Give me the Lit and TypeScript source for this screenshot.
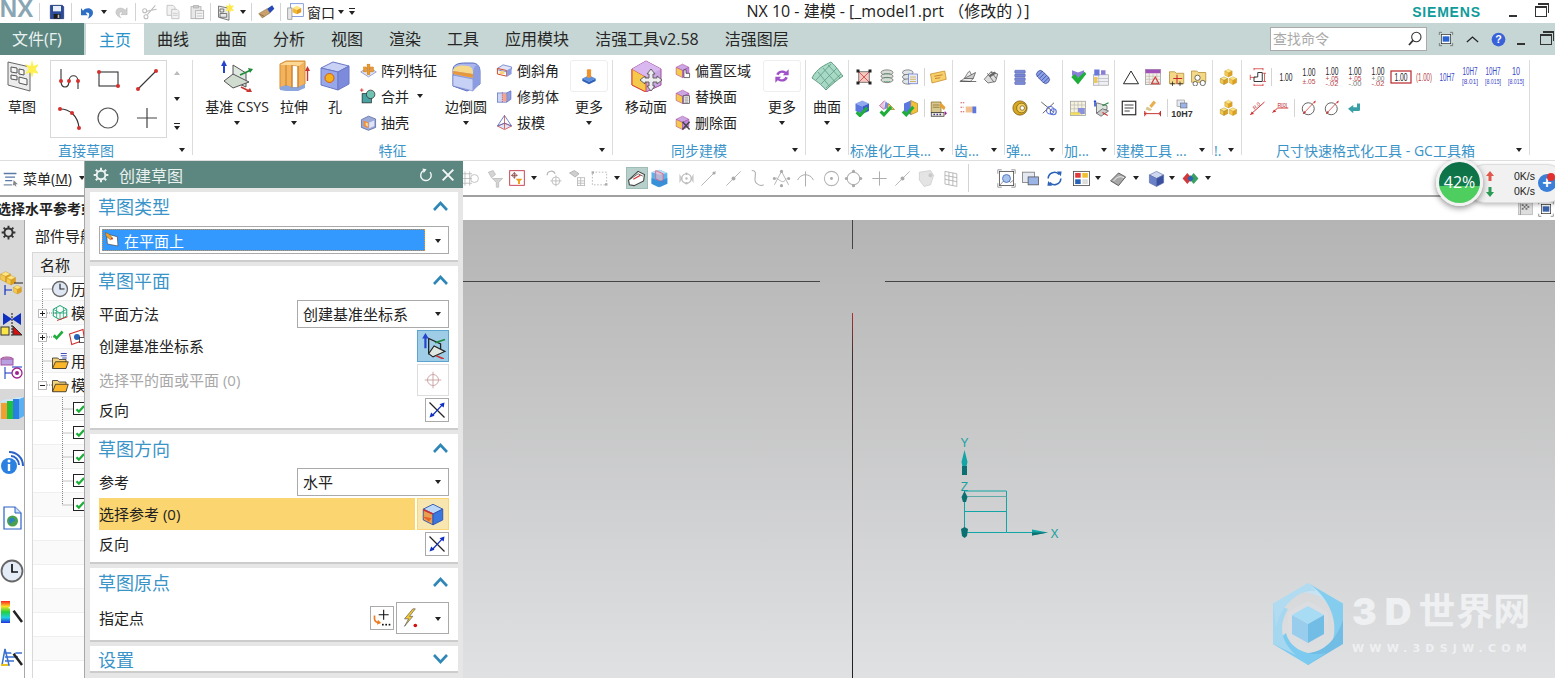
import { LitElement, html, css, svg } from "lit";
import { customElement } from "lit/decorators.js";

const cube = (t: string, l: string, r: string, s = "#5a6fa8") => svg`
  <path d="M12 3 21 7.5 12 12 3 7.5Z" fill=${t} stroke=${s} stroke-width=".8"/>
  <path d="M3 7.5 12 12V22L3 17.5Z" fill=${l} stroke=${s} stroke-width=".8"/>
  <path d="M21 7.5 12 12V22L21 17.5Z" fill=${r} stroke=${s} stroke-width=".8"/>`;

const dots = (...p: number[][]) => p.map(([x, y]) => svg`<circle cx=${x} cy=${y} r="2" fill="#d2312f"/>`);
const check = (x = 0, y = 0) => svg`<path transform="translate(${x} ${y})" d="M3 13 6 10 9 13 17 4 20 7 9 19Z" fill="#1fae3c"/>`;
const gray = "#b4b4b4";

// all drawn on a 24 box except the big ribbon ones, which use 32
const ICONS: Record<string, unknown> = {
  save: svg`<path d="M2 2H20L22 4V22H2Z" fill="#2a4a9a" stroke="#16306e"/><rect x="6" y="3" width="12" height="8" fill="#e8eef8"/><rect x="7" y="15" width="10" height="7" fill="#1c1c1c"/><rect x="13" y="16" width="2.5" height="5" fill="#bbb"/>`,
  undo: svg`<path d="M6 10C11 4 21 6 21 13C21 17 18 20 13 22C17 17 16 11 10 13L13 17H3V6Z" fill="#2d6fc4"/>`,
  redo: svg`<path transform="translate(24 0) scale(-1 1)" d="M6 10C11 4 21 6 21 13C21 17 18 20 13 22C17 17 16 11 10 13L13 17H3V6Z" fill="#cfcfcf" stroke="#aaa" stroke-width=".6"/>`,
  cut: svg`<g fill="none" stroke="#bdbdbd" stroke-width="1.6"><path d="M20 2 8 16M22 8 7 11"/><circle cx="6" cy="19" r="3"/><circle cx="4" cy="10" r="3"/></g>`,
  copy: svg`<g fill="#f2f2f2" stroke="#bbb" stroke-width="1.2"><path d="M3 2H12L15 5V17H3Z"/><path d="M10 8H18L21 11V22H10Z"/></g><path d="M12 14H19M12 17H19" stroke="#bbb"/>`,
  paste: svg`<rect x="3" y="4" width="15" height="18" fill="#e8e8e8" stroke="#aaa" stroke-width="1.2"/><rect x="7" y="2" width="7" height="4" fill="#ccc" stroke="#aaa"/><rect x="10" y="10" width="12" height="12" fill="#f5f5f5" stroke="#aaa" stroke-width="1.2"/><path d="M12 14H20M12 18H20" stroke="#aaa"/>`,
  newsk: svg`<path d="M2 4 16 7V23L2 19Z" fill="#e8e8e8" stroke="#555"/><path d="M4 8H9V12H4ZM4 14H13V19H4Z" fill="none" stroke="#555"/><path d="M17 0 18.5 4 23 3 20 7 23 11 18.5 10 17 14 15.5 10 11 11 14 7 11 3 15.5 4Z" fill="#ffe94a"/>`,
  brush: svg`<path d="M1 15 13 8 17 14 6 21Z" fill="#c9a06a" stroke="#7a5b30" stroke-width=".7"/><path d="M13 8 20 3 23 8 17 14Z" fill="#2748b8"/><path d="M3 16 9 19" stroke="#7a5b30"/>`,
  win: svg`<rect x="5" y="1" width="18" height="18" fill="#fff" stroke="#5a7ad0"/><path d="M14 4 20 7 14 10 8 7Z" fill="#ffe680"/><path d="M8 7 14 10V16L8 13Z" fill="#f2b632"/><path d="M20 7 14 10V16L20 13Z" fill="#e39a1a"/><rect x="1" y="7" width="6" height="16" fill="#e6e6e6" stroke="#888"/>`,
  skbig: svg`<path d="M2 2 24 7V31L2 25Z" fill="#ececec" stroke="#666"/><path d="M5 7 11 8V13L5 12ZM13 9 18 10V15L13 14ZM5 15 11 16V20L5 19ZM13 17 21 19V25L13 23Z" fill="#f7f7f7" stroke="#555"/><path d="M26 0 27.5 6 33 4 29.5 9 33 14 27.5 12.5 26 18 24.5 12.5 19 14 22.5 9 19 4 24.5 6Z" fill="#fff04f"/>`,
  spline: svg`<path d="M3 1V13C3 21 11 21 11 13C11 6 20 6 20 13V21" fill="none" stroke="#333" stroke-width="1.1"/>${dots([3, 13], [11, 13], [20, 13])}`,
  grect: svg`<rect x="3" y="4" width="19" height="14" fill="none" stroke="#333" stroke-width="1.1"/>${dots([3, 4], [22, 18])}`,
  gline: svg`<path d="M3 21 21 3" stroke="#333" stroke-width="1.1"/>${dots([3, 21], [21, 3])}`,
  garc: svg`<path d="M2 3C12 3 20 10 21 22" fill="none" stroke="#333" stroke-width="1.1"/>${dots([2, 3], [14, 7], [21, 22])}`,
  gcirc: svg`<circle cx="12" cy="12" r="10" fill="none" stroke="#555" stroke-width="1.2"/>`,
  gplus: svg`<path d="M12 2V22M2 12H22" stroke="#444" stroke-width="1.2"/>`,
  csys: svg`<path d="M12 5V21L25 27V13Z" fill="#dfe8e0" stroke="#555"/><path d="M3 21 12 14 28 22 12 28Z" fill="#cfdccf" stroke="#555"/><path d="M3 0 6 6H4V13H2V6H0Z" transform="translate(0 0)" fill="#2444d0"/><path d="M19 15 30 10" stroke="#1d8c3a" stroke-width="1.6"/><path d="M27 8 32 9 29 13Z" fill="#1d8c3a"/><path d="M20 27 28 31" stroke="#c8362f" stroke-width="1.6"/><path d="M25 32 31 32 29 28Z" fill="#c8362f"/>`,
  extrude: svg`<path d="M2 4 8 1 27 1 27 24 20 28 20 6 14 5 14 28 8 26 2 29Z" fill="#f3b25c" stroke="#d48e37"/><path d="M2 5 8 2 26 2 21 6 14 5 8 5Z" fill="#fbd894"/><path d="M2 27 8 25 14 27 20 27 27 24 27 28 20 31H8L2 30Z" fill="#8aa6dc"/><path d="M8 5V26M14 5V28M20 6V28" stroke="#c9802b" fill="none"/><path d="M29.500 21V9" stroke="#c8362f" stroke-width="1.4"/><path d="M27 11 29.500 6 32 11Z" fill="#c8362f"/>`,
  hole: svg`<path d="M2 8 14 2 30 6 19 12Z" fill="#c9d1f4" stroke="#6a78c8"/><path d="M2 8 19 12V30L2 25Z" fill="#98a6ea" stroke="#6a78c8"/><path d="M19 12 30 6V24L19 30Z" fill="#7d8bdc" stroke="#6a78c8"/><circle cx="10.500" cy="18" r="4.500" fill="#f5b11c" stroke="#d1591b"/>`,
  pattern: svg`<path d="M1 14 12 7 23 14 12 21Z" fill="#dfe4f6" stroke="#7a88c8"/><g fill="#ef9a2a" stroke="#b96b10" stroke-width=".5"><rect x="10" y="3" width="4" height="7"/><rect x="5" y="7" width="4" height="7"/><rect x="15" y="7" width="4" height="7"/><rect x="10" y="11" width="4" height="7"/></g>`,
  unite: svg`<rect x="3" y="8" width="13" height="13" fill="#49a3a3" stroke="#222"/><circle cx="15" cy="9" r="6" fill="#6fc2b2" stroke="#222"/><path d="M0 3H5M2.500 .5V5.500" stroke="#d22" stroke-width="1.2"/>`,
  shell: svg`<path d="M2 8 12 3 22 7V19L12 23 2 19Z" fill="#9caad8" stroke="#4c5a96"/><path d="M5 9 12 12V20L5 17Z" fill="#f08a3c"/><path d="M8 12 11 13V18L8 16Z" fill="#f8e0a0"/><path d="M13 12 20 9V17L13 20Z" fill="#dfe4f6"/>`,
  blend: svg`<path d="M3 10C3 4 9 3 16 3H22C28 3 30 7 30 12V24L17 31 3 26Z" fill="#a9b7ec" stroke="#5a6cc0"/><path d="M3 10C6 5 12 5 18 6 23 7 23 11 23 14L3 11Z" fill="#f6d98a"/><path d="M3 11 23 14V18L3 14Z" fill="#e8983a"/><path d="M3 15 23 19V31L3 26Z" fill="#c7d1f5" stroke="#5a6cc0" stroke-width=".5"/><path d="M23 14C23 10 24 5 28 5 30 8 30 12 30 24L23 31Z" fill="#8c9ce0"/>`,
  chamfer: svg`<path d="M2 9 10 4 22 7 22 10 15 14 2 11Z" fill="#dfe4f6" stroke="#5a6cc0"/><path d="M2 9 15 12V20L2 17Z" fill="none" stroke="#d14a2a" stroke-width="1.4"/><path d="M15 12 22 8V17L15 21Z" fill="#8c9ce0"/><path d="M5 13H12V17H5Z" fill="#fbd27a"/>`,
  trim: svg`<rect x="2" y="7" width="13" height="13" fill="#cdd6f6" stroke="#5a6cc0"/><path d="M15 7 21 4V16L15 20Z" fill="#8c9ce0" stroke="#5a6cc0"/><path d="M9 6V21" stroke="#c8362f" stroke-dasharray="2 1"/><rect x="10" y="8" width="5" height="11" fill="#f4a48a"/>`,
  draft: svg`<path d="M2 17 12 22 22 17 12 13Z" fill="#dfe4f6" stroke="#c8362f"/><path d="M12 2 2 17 12 13 22 17Z" fill="none" stroke="#5a6cc0" stroke-width="1.2"/><path d="M12 2V21" stroke="#c8362f"/>`,
  more1: svg`<path d="M4 15 12 11 20 15 12 19Z" fill="#5a90e0"/><path d="M4 15V18L12 22 20 18V15L12 19Z" fill="#2f62b8"/><rect x="9.500" y="4" width="5" height="10" rx="1" fill="#f2922a"/>`,
  move: svg`<path d="M16 1 31 9V25L16 32 2 25V9Z" fill="#c9a6e4" stroke="#a24aa0"/><path d="M2 9 16 17V32L2 25Z" fill="#f5c94b" stroke="#e0442b"/><path d="M16 1 31 9 16 17 2 9Z" fill="#d8b8ee"/><path d="M21 9 25 14H23V18H27V16L32 20 27 24V22H23V26H25L21 31 17 26H19V22H15V24L10 20 15 16V18H19V14H17Z" fill="#ededed" stroke="#555" stroke-width=".9"/>`,
  offset: svg`${cube("#c9a6e4", "#f5c94b", "#c08ae0", "#b04aa0")}<path d="M14 22V11H17V16H22V22Z" fill="#fff" stroke="#333"/>`,
  replace: svg`${cube("#c9a6e4", "#f5c94b", "#c08ae0", "#b04aa0")}<rect x="13" y="11" width="9" height="11" fill="#eee" stroke="#444"/><path d="M15 14H20M15 17H20M15 20H20" stroke="#666"/>`,
  del: svg`${cube("#c9a6e4", "#f5c94b", "#c08ae0", "#b04aa0")}<path d="M12 11 22 22M22 11 12 22" stroke="#444" stroke-width="2"/>`,
  more2: svg`<path d="M5 10C7 5 13 4 17 7L20 4V11H13L15 9C12 7 9 8 8 11Z" fill="#a050c8"/><path d="M19 14C17 19 11 20 7 17L4 20V13H11L9 15C12 17 15 16 16 13Z" fill="#a050c8"/>`,
  surf: svg`<path d="M1 18C6 8 14 5 20 2 26 7 29 13 32 16 26 20 20 25 15 30 10 24 5 21 1 18Z" fill="#a8d9c6" stroke="#5f9c82"/><path d="M7 12 19 27M12 8 24 22M17 5 29 18M5 20 20 4M10 24 26 8M15 28 30 14" stroke="#5f9c82" fill="none" stroke-width=".8"/>`,
  s1: svg`<rect x="5" y="5" width="14" height="14" fill="#f4c8c0" stroke="#555"/><path d="M5 5 19 19M19 5 5 19" stroke="#d2312f"/><g fill="#222"><rect x="2" y="2" width="4" height="4"/><rect x="18" y="2" width="4" height="4"/><rect x="2" y="18" width="4" height="4"/><rect x="18" y="18" width="4" height="4"/></g>`,
  s2: svg`<g fill="#d8dcd6" stroke="#666"><ellipse cx="12" cy="6" rx="8" ry="3.500"/><ellipse cx="12" cy="11" rx="8" ry="3.500"/><ellipse cx="12" cy="16" rx="8" ry="3.500"/></g><path d="M8 8H16M8 13H16M8 18H16" stroke="#3d9060" stroke-dasharray="2 1"/>`,
  s3: svg`<g fill="#dfe4e8" stroke="#666"><ellipse cx="9" cy="6" rx="7" ry="3.500"/><ellipse cx="9" cy="12" rx="7" ry="3.500"/><ellipse cx="9" cy="18" rx="7" ry="3.500"/></g><rect x="10" y="8" width="12" height="13" fill="#e8ecf8" stroke="#6a78c8"/><path d="M12 12H20M12 15H20M12 18H20" stroke="#c8a030"/>`,
  tag: svg`<path d="M2 8 21 4 23 15 4 20Z" fill="#f6d06a" stroke="#c88a20"/><path d="M7 11 18 9M8 14 15 13" stroke="#b86a20"/>`,
  c1: svg`<path d="M11 2 20 6 11 10 2 6Z" fill="#8fa8ee"/><path d="M11 10V20L20 16V6Z" fill="#3a5cd0"/><path d="M2 6V16L11 20V10Z" fill="#5a78e0"/>${check(-1, 6)}`,
  c2: svg`<path d="M10 3 18 10 8 14Z" fill="#7a8ae0"/><path d="M9 2 2 9 8 14" fill="#e8c8e0" stroke="#c04a8a"/><path d="M14 6 22 14H12Z" fill="#f0d070" stroke="#a08a20"/>${check(-1, 5)}`,
  c3: svg`<path d="M13 2 22 6V17L13 21Z" fill="#f3c03a" stroke="#b88a20"/><path d="M4 6 13 2V21L4 17Z" fill="#5a78e0"/>${check(-2, 5)}`,
  note: svg`<path d="M3 4H16V18H3Z" fill="#d8c890" stroke="#8a6a20"/><path d="M5 8H14M5 11H14" stroke="#8a6a20"/><rect x="3" y="18" width="17" height="5" fill="#f0e8d0" stroke="#333"/><path d="M6 20.500H8M10 20.500H12M14 20.500H16" stroke="#2a3ab0" stroke-width="2"/><path d="M16 5 22 11 20 15 14 9Z" fill="#e8a030"/><path d="M21 16V22L24 19Z" fill="#a020a0"/>`,
  hand1: svg`<path d="M2 17C8 16 10 7 14 4L19 14 15 18Z" fill="#eee" stroke="#555"/><path d="M7 14 22 6 19 14Z" fill="#ccc" stroke="#555"/><path d="M1 18H23" stroke="#444"/>`,
  hand2: svg`<path d="M3 15 12 5 21 8 18 18 8 20Z" fill="#ddd" stroke="#555"/><path d="M7 7 16 19M12 5 19 14" stroke="#555"/><path d="M10 11 18 6" stroke="#666" stroke-width="3"/>`,
  hand3: svg`<path d="M2 5H8M2 11H6M2 17H8" stroke="#b23" stroke-dasharray="2 1"/><path d="M9 10H19V18H9Z" fill="#f0c090"/><rect x="18" y="10" width="5" height="9" fill="#5a78e0"/>`,
  stack: svg`<g fill="#7a88d8" stroke="#3c4a9a" stroke-width=".6"><rect x="5" y="3" width="14" height="4" rx="1"/><rect x="5" y="8" width="14" height="4" rx="1"/><rect x="5" y="13" width="14" height="4" rx="1"/><rect x="5" y="18" width="14" height="4" rx="1"/></g>`,
  coil: svg`<circle cx="12" cy="12" r="9.500" fill="#d8a820" stroke="#7a5a10"/><circle cx="14" cy="12" r="6.500" fill="#f0d060" stroke="#7a5a10"/><circle cx="15" cy="12" r="3" fill="#fff" stroke="#7a5a10"/>`,
  spring: svg`<g transform="rotate(45 12 12)"><rect x="2" y="7" width="20" height="10" rx="5" fill="#8aa0e8" stroke="#3a4a98"/><path d="M6 7V17M10 7V17M14 7V17M18 7V17" stroke="#3a4a98"/></g>`,
  spring2: svg`<path d="M3 4 20 18M20 5 5 19" stroke="#555" stroke-width="1.2"/><circle cx="15" cy="15" r="5" fill="none" stroke="#5a70d8" stroke-width="1.500"/><circle cx="19" cy="17" r="4" fill="none" stroke="#5a70d8" stroke-width="1.500"/>`,
  addck: svg`<path d="M4 3 12 6 20 3V10L12 13 4 10Z" fill="#8a80d8"/><path d="M3 12 8 8 12 13 21 5 23 8 12 22Z" fill="#1fae3c"/>`,
  addform: svg`<rect x="2" y="9" width="20" height="14" fill="#eef0f6" stroke="#aaa"/><path d="M9 9V23M2 14H22M2 18H22" stroke="#bbb"/><path d="M3 2 10 2 10 10 3 10Z" fill="#6a78d8"/><rect x="12" y="3" width="6" height="6" fill="#8a80d8"/><rect x="3" y="12" width="4" height="8" fill="#f0c84a"/>`,
  addtbl: svg`<rect x="2" y="3" width="20" height="19" fill="#f8f4dc" stroke="#999"/><path d="M7 3V22M12 3V22M17 3V22M2 8H22M2 13H22M2 18H22" stroke="#bbb"/><rect x="12" y="12" width="9" height="8" fill="#8a90e0"/><rect x="2" y="18" width="13" height="3" fill="#f4dc50"/>`,
  csysm: svg`<path d="M6 5V19L20 14V9Z" fill="#dde6de" stroke="#555"/><path d="M6 19 14 13 22 16 12 23Z" fill="#ccc" stroke="#555"/><path d="M4 1 6 4H5V10H3V4H2Z" fill="#2444d0"/><path d="M14 9 22 5" stroke="#1d8c3a" stroke-width="1.500"/><path d="M14 18 21 22" stroke="#c8362f" stroke-width="1.500"/>`,
  tri: svg`<path d="M12 4 22 21H2Z" fill="none" stroke="#222" stroke-width="1.300"/>`,
  tblr: svg`<rect x="2" y="2" width="20" height="20" fill="#f4f0ea" stroke="#999"/><rect x="2" y="2" width="20" height="5" fill="#a050b8"/><path d="M7 7V22M12 7V22M17 7V22M2 11H22M2 15H22M2 19H22" stroke="#c0bcb0"/><path d="M15 12 20 21H10Z" fill="none" stroke="#d2312f" stroke-width="1.400"/>`,
  fold1: svg`<path d="M2 5H9L11 7H21V21H2Z" fill="#f3d888" stroke="#b08a30"/><path d="M12 9V21M7 14H19" stroke="#c8202a" stroke-width="1.300"/><path d="M6 18V24M3 21H9M16 18V24M13 21H20" stroke="#222"/>`,
  fold2: svg`<path d="M2 4H9L11 6H21V19H2Z" fill="#f3d888" stroke="#b08a30"/><circle cx="10" cy="13" r="3.500" fill="#fff" stroke="#444"/><circle cx="17" cy="20" r="3.500" fill="#fff" stroke="#444"/><circle cx="7" cy="21" r="3" fill="#fff" stroke="#444"/>`,
  list: svg`<rect x="3" y="3" width="18" height="18" fill="#fff" stroke="#222" stroke-width="1.500"/><path d="M6 8H18M6 12H18M6 16H13" stroke="#444" stroke-width="1.400"/>`,
  broom: svg`<path d="M13 2 16 5 10 12 7 9Z" fill="#e8b050"/><path d="M4 10 11 14 8 16 2 14Z" fill="#d8c890"/><path d="M1 16V23M22 16V23M1 19.500H22" stroke="#c02020" stroke-width="1.200"/><path d="M3 17.500 1 19.500 3 21.500M20 17.500 22 19.500 20 21.500" fill="none" stroke="#c02020"/>`,
  cubes: svg`<g transform="translate(6 0) scale(.55)">${cube("#ffe680", "#f5c94b", "#e0a020", "#b88a20")}</g><g transform="translate(0 10) scale(.55)">${cube("#ffe680", "#f5c94b", "#e0a020", "#807020")}</g><g transform="translate(12 10) scale(.55)">${cube("#ffe680", "#f5c94b", "#e0a020", "#b88a20")}</g>`,
  dimline: svg`<path d="M3 9V16M3 12.500H10" fill="none" stroke="#d2312f"/><path d="M22 7V18M20 7H24M20 18H24" fill="none" stroke="#d2312f"/><path d="M8 1H20M8 -1V3M20 -1V3M8 23H20M8 21V25M20 21V25" stroke="#d2312f" fill="none"/><path d="M8 12H13V6H19V18H8Z" fill="none" stroke="#333" stroke-width="1.300"/>`,
  rdiag: svg`<path d="M3 21 22 4" stroke="#d2312f" stroke-width="1.300"/><path d="M3 21 8 20 5 16.500Z" fill="#d2312f"/><text x="13" y="11" transform="rotate(-42 13 11)" text-anchor="middle" font-size="7" font-family="Liberation Sans" fill="#b8262a">R.0</text>`,
  rdiag2: svg`<path d="M2 18 9 12H23" fill="none" stroke="#d2312f" stroke-width="1.300"/><path d="M2 18 7 17 4 14Z" fill="#d2312f"/><text x="15" y="10" text-anchor="middle" font-size="7" font-family="Liberation Sans" fill="#b8262a">R[0]</text>`,
  dia1: svg`<circle cx="11" cy="13" r="8" fill="none" stroke="#555" stroke-width="1.200"/><path d="M4 20 20 3" stroke="#d2312f"/><path d="M18 4 21 2 20 6Z M6 16 4 20 8 18Z" fill="#d2312f"/>`,
  back: svg`<path d="M4 13 11 8V11H16V6H20V14C20 16 19 16 18 16H11V19Z" fill="#3aa0a8"/>`,
  search: svg`<circle cx="14" cy="9" r="7" fill="#fff" stroke="#333" stroke-width="1.600"/><path d="M9 14 3 21" stroke="#333" stroke-width="2.600"/>`,
  fit: svg`<path d="M2 6V2H6M18 2H22V6M22 18V22H18M6 22H2V18" fill="none" stroke="#555"/><rect x="5" y="5" width="14" height="14" fill="#fff" stroke="#222"/><rect x="7" y="8" width="10" height="8" fill="#2a62d0"/>`,
  chev: svg`<path d="M3 16 12 8 21 16" fill="none" stroke="#222" stroke-width="2"/>`,
  help: svg`<circle cx="12" cy="12" r="11" fill="#3a62d8"/><text x="12" y="18" text-anchor="middle" font-size="17" font-weight="700" font-family="Liberation Sans" fill="#fff">?</text>`,
  snap: svg`<g fill="none" stroke="${gray}"><path d="M2 6H14M2 12H14M2 18H14M5 3V21M11 3V21"/><circle cx="17" cy="12" r="5"/></g>`,
  tfil: svg`<path d="M3 4 9 2 12 7 7 11ZM8 12H21L16 17V23H13V17Z" fill="#d4d4d4" stroke="#bbb"/>`,
  snapf: svg`<rect x="1" y="1" width="22" height="22" fill="#fff" stroke="#c93a4a" stroke-width="1.400"/><path d="M8 3V13M3 8H13" stroke="#843b3b" stroke-width="1.200"/><circle cx="8" cy="8" r="3" fill="none" stroke="#843b3b"/><path d="M10 13H20L16.500 17V21H13.500V17Z" fill="#f0a020"/>`,
  tg3: svg`<g fill="none" stroke="${gray}"><path d="M4 8C4 2 12 1 14 6" stroke-width="1.500"/><circle cx="15" cy="15" r="5"/><path d="M15 8V22M8 15H22"/></g>`,
  tg4: svg`<path d="M2 5 8 2 14 6 9 10Z" fill="#cfcfcf" stroke="#aaa"/><g fill="none" stroke="${gray}"><rect x="12" y="11" width="9" height="10"/><path d="M12 15H21M12 18H21M16 11V21"/></g>`,
  tg5: svg`<rect x="3" y="4" width="18" height="16" fill="none" stroke="#aaa" stroke-dasharray="2 2"/><g fill="#aaa"><rect x="2" y="3" width="3" height="3"/><rect x="19" y="18" width="3" height="3"/></g>`,
  wshade: svg`<path d="M2 14 14 3 22 7 21 15 9 21 3 20Z" fill="#fff" stroke="#444" stroke-width="1.400"/><path d="M4 13 14 6 20 9" fill="none" stroke="#444"/><path d="M8 13 17 8" stroke="#d2312f" stroke-width="1.500"/>`,
  shade: svg`<path d="M3 5 13 2 22 6V19L11 23 3 19Z" fill="#5ab4ee"/><path d="M3 5 13 8 22 6 13 2Z" fill="#b8dcf5"/><path d="M8 3V13L17 17V7Z" fill="#f3b8c8" fill-opacity=".6" stroke="#e0607a"/><path d="M3 19 13 23 22 19V12L13 16 3 12Z" fill="#2a80d0" fill-opacity=".7"/>`,
  tg6: svg`<path d="M3 6 7 12 3 18ZM21 6 17 12 21 18Z" fill="#ccc"/><circle cx="12" cy="12" r="6" fill="none" stroke="${gray}" stroke-width="1.300"/><g fill="#bbb"><circle cx="12" cy="6" r="1.500"/><circle cx="12" cy="18" r="1.500"/><circle cx="12" cy="12" r="1.500"/></g>`,
  tg7: svg`<path d="M3 21 21 3" stroke="${gray}" stroke-width="1.200"/><circle cx="19" cy="5" r="2" fill="#aaa"/>`,
  tg8: svg`<path d="M3 21 21 3" stroke="${gray}" stroke-width="1.200"/><circle cx="12" cy="12" r="2.500" fill="#aaa"/>`,
  tg9: svg`<path d="M6 2C16 2 6 14 12 18 15 21 19 21 21 20" fill="none" stroke="#aaa" stroke-width="1.300"/>`,
  tg10: svg`<path d="M3 20 12 3 21 20M5 11C10 14 14 20 18 12" fill="none" stroke="${gray}" stroke-width="1.200"/><g fill="#aaa"><circle cx="12" cy="3" r="2"/><circle cx="3" cy="12" r="2"/><circle cx="12" cy="21" r="2"/><circle cx="21" cy="12" r="2"/></g>`,
  tg11: svg`<path d="M2 14C6 5 18 5 22 14M12 3V22" fill="none" stroke="#aaa" stroke-width="1.200"/>`,
  tg12: svg`<circle cx="12" cy="12" r="9" fill="none" stroke="${gray}" stroke-width="1.300"/><circle cx="12" cy="12" r="1.800" fill="#aaa"/>`,
  tg13: svg`<circle cx="12" cy="12" r="8" fill="none" stroke="${gray}" stroke-width="1.300"/><g fill="#aaa"><circle cx="12" cy="3" r="2"/><circle cx="12" cy="21" r="2"/><circle cx="3" cy="12" r="2"/><circle cx="21" cy="12" r="2"/></g>`,
  tg14: svg`<path d="M12 3V21M3 12H21" stroke="#aaa" stroke-width="1.200"/>`,
  tg15: svg`<path d="M3 4 17 2 21 8 17 20 9 22 3 14Z" fill="#e4e4e4" stroke="#ccc"/><circle cx="17" cy="8" r="2.500" fill="#c8c8c8"/>`,
  tg16: svg`<path d="M5 3 20 6V22L5 19Z" fill="none" stroke="#aaa"/><path d="M5 8 20 11M5 13 20 16M10 4V20M15 5V21" stroke="#aaa"/>`,
  view1: svg`<rect x="3" y="3" width="18" height="18" fill="#fff" stroke="#444"/><path d="M3 21 12 11 17 17 21 14" fill="none" stroke="#777"/><circle cx="12" cy="12" r="5" fill="#a8c4ec" stroke="#3a62b8"/><path d="M1 6V1H6M18 1H23V6M1 18V23H6M18 23H23V18" fill="none" stroke="#888"/>`,
  view2: svg`<rect x="2" y="4" width="15" height="13" fill="#e4e8f0" stroke="#777"/><rect x="9" y="10" width="13" height="10" fill="#9ab4e8" stroke="#555"/>`,
  rot: svg`<path d="M4 12A8 8 0 0 1 18 7" fill="none" stroke="#2a62b8" stroke-width="2"/><path d="M20 12A8 8 0 0 1 6 17" fill="none" stroke="#2a62b8" stroke-width="2"/><path d="M15 3 21 3 20 9Z" fill="#2a62b8"/><path d="M9 21 3 21 4 15Z" fill="#2a62b8"/>`,
  vgrid: svg`<rect x="2" y="3" width="20" height="18" fill="#fff" stroke="#444"/><rect x="4" y="5" width="7" height="6" fill="#e03a3a"/><rect x="13" y="5" width="7" height="6" fill="#f0c030"/><rect x="4" y="13" width="7" height="6" fill="#2a62b8"/><rect x="13" y="13" width="7" height="6" fill="#ddd"/>`,
  hat: svg`<path d="M2 15 12 5 21 10 12 21Z" fill="#a8a8a8" stroke="#444"/><path d="M6 15C10 9 15 9 19 11" fill="none" stroke="#fff"/>`,
  vcube: svg`${cube("#cfd8f0", "#6a80c8", "#3a50a0")}`,
  vdiamond: svg`<path d="M2 12 8 5 14 12 8 19Z" fill="#d23a3a"/><path d="M10 12 16 5 22 12 16 19Z" fill="#3aa060"/><path d="M8 12 12 8 16 12 12 16Z" fill="#2a62b8"/>`,
  menu: svg`<path d="M1 4H19V6H1ZM3 9H17V11H3ZM3 14H13V16H3Z" fill="#5a7aa8"/><path d="M1 20H13V22H1Z" fill="#8a9ab0"/><path d="M15 14 21 20 18 20 19 24 16 21 14 22Z" fill="#888"/>`,
  gear: svg`<circle cx="12" cy="12" r="6.500" fill="none" stroke="currentColor" stroke-width="3"/><g stroke="currentColor" stroke-width="3"><path d="M12 1V5M12 19V23M1 12H5M19 12H23M4.200 4.200 7 7M17 17 19.800 19.800M19.800 4.200 17 7M7 17 4.200 19.800"/></g>`,
  reset: svg`<path d="M7 5A9 9 0 1 0 19 7" fill="none" stroke="#f2f6f5" stroke-width="2.400"/><path d="M13 2 6 1 8 9Z" fill="#f2f6f5"/>`,
  close: svg`<path d="M4 4 20 20M20 4 4 20" stroke="#f2f6f5" stroke-width="3"/>`,
  skplane: svg`<path d="M4 3 20 7 21 21 5 18Z" fill="#fff" stroke="#444"/><path d="M2 1 6 2 13 9 10 12 3 6Z" fill="#e8a030" stroke="#7a4a10" stroke-width=".7"/><path d="M11 9 13 11" stroke="#d2312f" stroke-width="2"/>`,
  csysb: svg`<path d="M8 5V19L19 16V10Z" fill="none" stroke="#222" stroke-width="1.200"/><path d="M8 19 13 12 23 17 12 22Z" fill="#dfe8e0" stroke="#222"/><path d="M5 0 8 5H6V14H4V5H2Z" fill="#2444d0"/><path d="M14 9 23 6" stroke="#1d8c3a" stroke-width="1.600"/><path d="M15 21 22 24" stroke="#c8362f" stroke-width="1.600"/>`,
  target: svg`<circle cx="12" cy="12" r="6" fill="none" stroke="#c9a0a0"/><path d="M12 3V21M3 12H21" stroke="#c9a0a0"/>`,
  flip: svg`<path d="M3 3 21 21" stroke="#222" stroke-width="1.400"/><path d="M20 4 7 18" stroke="#1030c0" stroke-width="1.500"/><path d="M21 3 20 9 15 5ZM3 21 5 15 9 19Z" fill="#1030c0"/>`,
  pick: svg`${cube("#bcd8f8", "#e8a050", "#3a78e0", "#2a50b0")}<path d="M3 8 12 12" stroke="#d2312f" stroke-width="1.500"/><path d="M2 14 11 16 8 19 6 17" fill="#e8602a"/>`,
  point: svg`<path d="M3 9V13C3 16 6 18 9 17" fill="none" stroke="#f07a20" stroke-width="2"/><path d="M7 14 11 18 6 20Z" fill="#f07a20"/><path d="M14 2V14M8 8H20" stroke="#111" stroke-width="1.300"/><g fill="#111"><rect x="12" y="19" width="2" height="2"/><rect x="16" y="19" width="2" height="2"/><rect x="20" y="19" width="2" height="2"/></g>`,
  bolt: svg`<path d="M13 1 3 13 8 13 3 22 13 10 9 10 16 1Z" fill="#f5c830" stroke="#555" stroke-width=".8"/><circle cx="16" cy="21" r="2.200" fill="#d21010"/>`,
  clock: svg`<circle cx="12" cy="12" r="10" fill="#dfe6f4" stroke="#666" stroke-width="1.800"/><path d="M12 5V12H18" fill="none" stroke="#222" stroke-width="1.500"/>`,
  cube3d: svg`<path d="M12 2 21 7V16L12 21 3 16V7Z" fill="none" stroke="#16a070" stroke-width="1.300"/><path d="M3 7 12 12 21 7M12 12V21M7.500 4.500V18.500M16.500 4.500V18.500M3 12 21 12" fill="none" stroke="#16a070"/><path d="M8 22 22 17" stroke="#d2312f" stroke-width="1.300"/>`,
  redcam: svg`<path d="M2 8 20 2 22 16 5 22Z" fill="#fff" stroke="#d2312f" stroke-width="1.500"/><circle cx="12" cy="12" r="4" fill="#2a62b8"/><rect x="15" y="12" width="8" height="8" fill="#222"/><rect x="16" y="13" width="6" height="6" fill="#fff"/>`,
  folder: svg`<path d="M2 6H9L11 8H20V20H2Z" fill="#f3d27a" stroke="#222"/><path d="M6 11H23L20 21H2Z" fill="#fbb62a" stroke="#222"/>`,
  folderu: svg`<path d="M2 8H9L11 10H20V21H2Z" fill="#f3d27a" stroke="#222"/><path d="M6 13H23L20 22H2Z" fill="#fbb62a" stroke="#222"/><path d="M13 2H21M13 5H21M15 8H21" stroke="#2a3ab0" stroke-width="1.200"/>`,
  asm: svg`<g transform="translate(-1 -1) scale(.55)">${cube("#ffe680", "#f5c94b", "#e0a020", "#c89020")}</g><g transform="translate(5 3) scale(.5)">${cube("#ffe680", "#f5c94b", "#e0a020", "#c89020")}</g><path d="M5 14V24M5 19H12" stroke="#1030c0" stroke-width="1.200"/><g transform="translate(12 13) scale(.45)">${cube("#ffe680", "#f5c94b", "#e0a020", "#c89020")}</g><path d="M14 12H23" stroke="#222"/>`,
  bow: svg`<path d="M3 0 12 6 3 12ZM21 0 12 6 21 12Z" fill="#1030c0"/><rect x="1" y="14" width="8" height="8" fill="#fbe64a" stroke="#333"/><path d="M13 22V13L22 22Z" fill="#d21010" stroke="#333"/><path d="M12 0V24" stroke="#111" stroke-dasharray="2 1"/>`,
  roles: svg`<ellipse cx="7" cy="4" rx="6" ry="2" fill="#d0a0c0" stroke="#a050a0"/><rect x="1" y="4" width="12" height="6" fill="#b8a0e0" stroke="#a050a0"/><path d="M5 12V24M5 18H12M12 12H22" stroke="#1030c0"/><circle cx="17" cy="18" r="5" fill="none" stroke="#a02090" stroke-width="1.300"/><circle cx="17" cy="18" r="2" fill="#a02090"/>`,
  books: svg`<rect x="1" y="7" width="6" height="16" fill="#f0a030"/><rect x="7" y="5" width="6" height="18" fill="#20c040"/><rect x="13" y="3" width="6" height="20" fill="#2a80e0"/><path d="M19 3 24 1V20L19 23Z" fill="#5ab0f0"/><path d="M1 7 6 5H7V5H13V3H19L24 1H18L12 3H7L1 5Z" fill="#cfe6f8"/>`,
  info: svg`<path d="M9 1C17 1 23 7 23 15" fill="none" stroke="#2a62c8" stroke-width="2"/><path d="M11 5C15 5 19 9 19 14" fill="none" stroke="#2a62c8" stroke-width="2"/><circle cx="9" cy="15" r="8" fill="#2a80e0"/><path d="M9 13V20" stroke="#fff" stroke-width="2.400"/><circle cx="9" cy="10" r="1.500" fill="#fff"/>`,
  page: svg`<path d="M4 1H15L21 7V23H4Z" fill="#fff" stroke="#2a62c8" stroke-width="1.200"/><path d="M15 1V7H21" fill="#cfe0f8" stroke="#2a62c8"/><circle cx="12.500" cy="15" r="5.500" fill="#4aa050"/><path d="M9 14C11 10 15 12 15 15 12 15 11 18 10 18Z" fill="#2a80c8"/>`,
  clockb: svg`<circle cx="12" cy="12" r="10.500" fill="#e4ecf8" stroke="#666" stroke-width="1.800"/><path d="M12 5V13H18" fill="none" stroke="#111" stroke-width="1.700"/>`,
  colors: svg`<defs><linearGradient id="rb" x1="0" x2="0" y1="0" y2="1"><stop offset="0" stop-color="#ff2020"/><stop offset=".25" stop-color="#f8e020"/><stop offset=".5" stop-color="#20d040"/><stop offset=".75" stop-color="#20d0e0"/><stop offset="1" stop-color="#2030e0"/></linearGradient></defs><rect x="1" y="1" width="9" height="22" fill="url(#rb)"/><path d="M13 10 22 22" stroke="#222" stroke-width="2.500"/><path d="M11 1 12.500 5 16 3 14.500 7 18 8 14.500 10 12 12 11 9 8 8 11 6Z" fill="#fff"/>`,
  wand: svg`<path d="M2 22 5 6 9 22ZM5 10H22M5 14H18M5 18H14" fill="none" stroke="#3a70d0" stroke-width="1.500"/><path d="M13 10 22 22" stroke="#222" stroke-width="2.500"/><path d="M11 1 12.500 5 16 3 14.500 7 18 8 14.500 10 12 12 11 9 8 8 11 6Z" fill="#fff"/><path d="M1 22H8" stroke="#e8c020" stroke-width="2"/>`,
  checker: svg`<rect x="1" y="2" width="22" height="20" fill="#ddd" stroke="#aaa"/><g fill="#777"><rect x="6" y="5" width="3" height="3"/><rect x="12" y="5" width="3" height="3"/><rect x="9" y="8" width="3" height="3"/><rect x="15" y="8" width="3" height="3"/><rect x="6" y="11" width="3" height="3"/><rect x="12" y="11" width="3" height="3"/></g><path d="M4 4V22" stroke="#777"/>`,
  screen: svg`<rect x="5" y="5" width="14" height="14" fill="#fff" stroke="#222"/><rect x="7" y="8" width="10" height="8" fill="#3a62a8"/><path d="M1 5V1H5M19 1H23V5M23 19V23H19M5 23H1V19" fill="none" stroke="#666"/>`,
};

const BIG = new Set(["skbig", "csys", "extrude", "hole", "blend", "move", "surf"]);

const ic = (name: string, size = 16) => html`<svg
  class="ic"
  width=${size}
  height=${size}
  viewBox=${BIG.has(name) ? "0 0 32 32" : "0 0 24 24"}
>${ICONS[name]}</svg>`;

const caret = html`<i class="caret"></i>`;

// small dimension samples of the GC toolbox, kept as real text
type Line = [string, string, number, number, number?];
const dim = (lines: Line[], box?: string) => html`<svg class="ic" width="22" height="22" viewBox="0 0 22 22">
  ${box ? svg`<rect x="1" y="5" width="20" height="12" fill="#fff" stroke=${box} stroke-width="1.200"/>` : ""}
  ${lines.map(([t, c, y, len, fs = 10]) => svg`<text x="11" y=${y} text-anchor="middle" font-size=${fs} font-family="Liberation Sans" fill=${c}
    textLength=${len} lengthAdjust="spacingAndGlyphs">${t}</text>`)}
</svg>`;

interface Item { c: number; w: number; t: unknown }
// flow items one after the other, the gap before each comes from its centre in the data
const placed = (origin: number, items: Item[]) => {
  let edge = origin;
  return items.map((i) => {
    const left = i.c - i.w / 2;
    const gap = left - edge;
    edge = left + i.w;
    return html`<div class="cell" style="margin-left:${gap}px;width:${i.w}px">${i.t}</div>`;
  });
};
const mini = (list: [string | unknown, number][]) =>
  list.map(([n, c]) => ({
    c,
    w: n === "sep" ? 1 : 22,
    t: n === "sep" ? html`<span class="vsep"></span>` : typeof n === "string" ? ic(n, 18) : n,
  }));

const big = (name: string, label: string, drop = true, size = 32) => html`<div class="big">
  ${ic(name, size)}<span class="blabel">${label}</span>${drop ? caret : ""}
</div>`;
const more = (name: string) => html`<div class="big">
  <span class="morebox">${ic(name, 20)}</span><span class="blabel">更多</span>${caret}
</div>`;
const col = (rows: [string, string, boolean?][]) => html`<div class="col">
  ${rows.map(([n, t, d]) => html`<div class="smallrow">${ic(n, 17)}<span>${t}</span>${d ? html`<i class="caret mc"></i>` : ""}</div>`)}
</div>`;

interface Group { x: number; w: number; label: string; center?: boolean; body: unknown }

const minis = (x: number, a: [string | unknown, number][], b: [string | unknown, number][]) => html`<div class="minis">
  <div class="mrow">${placed(x, mini(a))}</div>
  <div class="mrow">${placed(x, mini(b))}</div>
</div>`;

const B = "#3c46c8";
const R = "#b8434a";
const K = "#222";
const H = "#777";

const GROUPS: Group[] = [
  {
    x: 0, w: 193, label: "直接草图", center: true,
    body: html`<div class="body">${placed(0, [
      { c: 22, w: 34, t: html`<div class="big">${ic("skbig", 32)}<span class="blabel">草图</span></div>` },
      {
        c: 108.5, w: 117, t: html`<div class="gallery">
          ${["spline", "grect", "gline", "garc", "gcirc", "gplus"].map((n) => html`<span class="gcell">${ic(n, 24)}</span>`)}
        </div>`,
      },
      {
        c: 177, w: 12, t: html`<div class="scrollc">
          <i class="caret up"></i>${caret}<span class="over">${caret}</span>
        </div>`,
      },
    ])}</div>`,
  },
  {
    x: 193, w: 420, label: "特征", center: true,
    body: html`<div class="body">${placed(193, [
      { c: 237, w: 68, t: big("csys", "基准 CSYS") },
      { c: 294, w: 34, t: big("extrude", "拉伸") },
      { c: 335, w: 32, t: big("hole", "孔", false) },
      { c: 399, w: 78, t: col([["pattern", "阵列特征"], ["unite", "合并", true], ["shell", "抽壳"]]) },
      { c: 466, w: 44, t: big("blend", "边倒圆") },
      { c: 529, w: 66, t: col([["chamfer", "倒斜角"], ["trim", "修剪体"], ["draft", "拔模"]]) },
      { c: 589, w: 38, t: more("more1") },
    ])}</div>`,
  },
  {
    x: 613, w: 193, label: "同步建模", center: true,
    body: html`<div class="body">${placed(613, [
      { c: 646, w: 44, t: big("move", "移动面", false) },
      { c: 714, w: 80, t: col([["offset", "偏置区域"], ["replace", "替换面"], ["del", "删除面"]]) },
      { c: 782, w: 38, t: more("more2") },
    ])}</div>`,
  },
  {
    x: 806, w: 43, label: "",
    body: html`<div class="body">${placed(806, [{ c: 827, w: 34, t: big("surf", "曲面") }])}</div>`,
  },
  {
    x: 849, w: 104, label: "标准化工具...",
    body: minis(849, [["s1", 864], ["s2", 887], ["s3", 910], ["sep", 924], ["tag", 938]], [["c1", 863], ["c2", 887], ["c3", 910], ["sep", 924], ["note", 938]]),
  },
  {
    x: 953, w: 52, label: "齿...",
    body: minis(953, [["hand1", 968], ["hand2", 991]], [["hand3", 968]]),
  },
  {
    x: 1005, w: 58, label: "弹...",
    body: minis(1005, [["stack", 1020], ["spring", 1043]], [["coil", 1020], ["spring2", 1048]]),
  },
  {
    x: 1063, w: 52, label: "加...",
    body: minis(1063, [["addck", 1078], ["addform", 1101]], [["addtbl", 1078], ["csysm", 1101]]),
  },
  {
    x: 1115, w: 98, label: "建模工具 ...",
    body: minis(1115, [["tri", 1131], ["tblr", 1153], ["fold1", 1177], ["fold2", 1199]], [
      ["list", 1129], ["broom", 1153], ["sep", 1167],
      [html`<div class="binoc">${ic("view2", 12)}<b>10H7</b></div>`, 1182],
    ]),
  },
  {
    x: 1213, w: 29, label: "!.",
    body: minis(1213, [["cubes", 1228]], [["cubes", 1228]]),
  },
  {
    x: 1242, w: 288, label: "尺寸快速格式化工具 - GC工具箱", center: true,
    body: minis(1242, [
      ["dimline", 1257], ["sep", 1271],
      [dim([["1.00", K, 14.5, 13]]), 1286],
      [dim([["1.00", K, 10, 13], ["±.05", R, 18, 13, 8]]), 1309],
      [dim([["1.00", K, 9, 13], ["+.05", R, 15, 13, 7], ["-.02", R, 20, 13, 7]]), 1332],
      [dim([["1.00", K, 9, 13], ["+.05", R, 15, 13, 7], ["-.00", H, 20, 13, 7]]), 1355],
      [dim([["1.00", K, 9, 13], ["+.00", H, 15, 13, 7], ["-.02", R, 20, 13, 7]]), 1378],
      [dim([["1.00", K, 14.5, 13]], "#b8262a"), 1401],
      [dim([["(1.00)", R, 14.5, 16]]), 1424],
      [dim([["10H7", B, 14.5, 15]]), 1447],
      [dim([["10H7", B, 9, 15], ["[8.01]", B, 17.5, 16, 8]]), 1470],
      [dim([["10H7", B, 9, 15], ["[8.015]", B, 17.5, 16, 8]]), 1493],
      [dim([["10", B, 9, 8], ["[8.015]", B, 17.5, 16, 8]]), 1516],
    ], [
      ["rdiag", 1257], ["rdiag2", 1280], ["sep", 1294], ["dia1", 1309], ["dia1", 1332], ["back", 1354],
    ]),
  },
];

const TOOLS: [string, number, number?][] = [
  ["snap", 470], ["tfil", 495], ["snapf", 517, 16], ["caret", 534], ["tg3", 553], ["tg4", 577], ["tg5", 599], ["caret", 617],
  ["tg6", 686], ["tg7", 708], ["tg8", 733], ["tg9", 756], ["tg10", 781], ["tg11", 805], ["tg12", 831], ["tg13", 853],
  ["tg14", 879], ["tg8", 902], ["tg15", 926], ["tg16", 950], ["sep", 968], ["view1", 1006], ["view2", 1030], ["rot", 1054],
  ["vgrid", 1081], ["caret", 1098], ["hat", 1118], ["caret", 1136], ["vcube", 1156], ["caret", 1172], ["vdiamond", 1190], ["caret", 1208],
];

const toolItems = (): Item[] => {
  const out: Item[] = [
    {
      c: 44, w: 82,
      t: html`<div class="menubtn">${ic("menu", 17)}<span>菜单(<u>M</u>)</span>${caret}</div>`,
    },
  ];
  for (const [n, c, s] of TOOLS) {
    if (n === "caret") out.push({ c, w: 8, t: caret });
    else if (n === "sep") out.push({ c, w: 1, t: html`<span class="vsep tall"></span>` });
    else out.push({ c, w: 21, t: ic(n, s ?? 19) });
    if (n === "caret" && c === 617) {
      out.push({ c: 636.5, w: 22, t: html`<span class="active">${ic("wshade", 19)}</span>` });
      out.push({ c: 659, w: 22, t: ic("shade", 20) });
    }
  }
  return out;
};

// name, top, bottom, icon centre (page y), grey button behind
const RAIL: [string, number, number, number, boolean?][] = [
  ["asm", 262, 304, 283, true],
  ["bow", 304, 345, 325, true],
  ["roles", 345, 389, 367],
  ["books", 389, 430, 408, true],
  ["info", 430, 490, 463],
  ["page", 490, 545, 518],
  ["clockb", 545, 592, 571],
  ["colors", 592, 634, 612],
  ["wand", 634, 678, 655],
];

type Row = { glyph: string; icon?: string; extra?: string; text: string };
// the dialog hides all but the first character of these rows
const ROWS: Row[] = [
  { glyph: "top", icon: "clock", text: "历" },
  { glyph: "plus", icon: "cube3d", text: "模" },
  { glyph: "plus", extra: "tick", icon: "redcam", text: "" },
  { glyph: "line", icon: "folderu", text: "用" },
  { glyph: "minus", icon: "folder", text: "模" },
  { glyph: "kid", text: "" },
  { glyph: "kid", text: "" },
  { glyph: "kid", text: "" },
  { glyph: "kid", text: "" },
  { glyph: "last", text: "" },
];

const GLYPHS: Record<string, unknown> = {
  top: svg`<path d="M9.500 12V24M9.500 12H24" />`,
  line: svg`<path d="M9.500 0V24M9.500 12H24" />`,
  plus: svg`<path d="M9.500 0V24M14 12H24" /><rect x="5.500" y="8.500" width="8" height="8" fill="#fff" stroke="#bbb" stroke-dasharray="none"/><path d="M7 12.500H12M9.500 10V15" stroke="#222" stroke-dasharray="none"/>`,
  minus: svg`<path d="M9.500 0V8M14 12H24" /><rect x="5.500" y="8.500" width="8" height="8" fill="#fff" stroke="#bbb" stroke-dasharray="none"/><path d="M7 12.500H12" stroke="#222" stroke-dasharray="none"/>`,
  kid: svg`<path d="M29.500 0V24M29.500 12H40" />`,
  last: svg`<path d="M29.500 0V12H40" />`,
};

@customElement("app-root")
export class AppRoot extends LitElement {
  static styles = css`
    :host {
      display: block;
      position: relative;
      width: 1555px;
      height: 678px;
      overflow: hidden;
      background: #fff;
      font-family: "Open Sans", "Noto Sans CJK SC", sans-serif;
      font-size: 14px;
      color: #222;
    }
    * { box-sizing: border-box; }
    .ic { display: block; flex: none; overflow: hidden; }
    .cell { flex: none; display: flex; justify-content: center; }
    .caret {
      display: inline-block;
      flex: none;
      width: 0;
      height: 0;
      border: 3.5px solid transparent;
      border-top: 4px solid #222;
      border-bottom: 0;
    }
    .caret.up { border-top: 0; border-bottom: 4px solid #bbb; }
    .vsep { display: block; width: 1px; height: 18px; background: #d4d4d4; }
    .vsep.tall { height: 28px; }

    .titlebar { display: flex; align-items: center; height: 23px; }
    .titlebar .cell { align-items: center; }
    .nx {
      font: 700 24px/23px "Liberation Sans", sans-serif;
      color: #8aa5b3;
      height: 23px;
      margin-top: -6px;
    }
    .winname { font-size: 16px; white-space: nowrap; line-height: 23px; }
    .siemens {
      font: 700 14px/16px "Liberation Sans", sans-serif;
      color: #0f9b9b;
      letter-spacing: 0.8px;
      white-space: nowrap;
    }
    .qa { white-space: nowrap; font-size: 14px; }
    .min { width: 8px; height: 2px; background: #333; margin-top: 9px; }
    .restore { position: relative; width: 12px; height: 11px; border: 1.5px solid #333; border-top-width: 2px; }
    .restore::before {
      content: "";
      position: absolute;
      left: 1.5px;
      top: -5px;
      width: 10px;
      height: 8px;
      border: 1.5px solid #333;
      border-top-width: 2px;
      border-bottom: 0;
      border-left: 0;
    }

    .tabs { display: flex; align-items: stretch; height: 32px; background: #c6d6d4; font-size: 16px; line-height: 32px; }
    .file { width: 84px; padding-left: 12px; background: #5c8680; color: #eaf2f0; }
    .tab { padding: 0 13px; color: #262626; white-space: nowrap; }
    .tab.on { margin-left: 2px; background: #fff; color: #2b93c9; border-top: 1px solid #e4e4e4; }
    .tabright { margin-left: auto; display: flex; align-items: center; width: 285px; }
    .tabright .cell { align-items: center; }
    .search {
      display: flex;
      align-items: center;
      justify-content: space-between;
      width: 157px;
      height: 24px;
      padding: 0 3px 0 2px;
      background: #fff;
      border: 1px solid #aaa;
      color: #aaa;
      font-size: 14px;
      line-height: 20px;
    }

    .ribbon { display: flex; height: 106px; padding-top: 5px; border-bottom: 1px solid #dedede; }
    .grp { flex: none; display: flex; flex-direction: column; height: 95px; border-right: 1px solid #dcdcdc; }
    .gbody { height: 81px; overflow: hidden; }
    .body { display: flex; align-items: flex-start; }
    .gfoot { display: flex; height: 15px; color: #3a94c8; font-size: 14px; line-height: 21px; }
    .glabel { flex: 1; min-width: 0; height: 21px; white-space: nowrap; overflow: hidden; padding-left: 1px; }
    .glabel.center { text-align: center; padding-left: 0; }
    .gcaret { flex: none; width: 20px; height: 15px; display: flex; justify-content: center; padding-top: 8px; }

    .big { display: flex; flex-direction: column; align-items: center; white-space: nowrap; }
    .blabel { margin-top: 6px; font-size: 14px; line-height: 18px; }
    .big .caret { margin-top: 5px; }
    .morebox {
      display: flex;
      align-items: center;
      justify-content: center;
      width: 38px;
      height: 32px;
      border: 1px solid #eee;
      border-radius: 3px;
    }
    .gallery {
      display: grid;
      grid-template-columns: repeat(3, 1fr);
      grid-template-rows: repeat(2, 1fr);
      width: 117px;
      height: 78px;
      border: 1px solid #d8d8d8;
    }
    .gcell { display: flex; align-items: center; justify-content: center; }
    .scrollc { display: flex; flex-direction: column; align-items: center; gap: 22px; padding-top: 11px; }
    .over { display: flex; flex-direction: column; align-items: center; border-top: 1px solid #222; padding-top: 2px; }
    .col { display: flex; flex-direction: column; gap: 6px; width: 100%; }
    .smallrow { display: flex; align-items: center; gap: 4px; height: 20px; white-space: nowrap; font-size: 14px; }
    .smallrow .mc { margin-left: 4px; }
    .minis { display: flex; flex-direction: column; gap: 11px; padding-top: 7px; }
    .mrow { display: flex; height: 20px; align-items: center; }
    .mrow .cell { align-items: center; }
    .binoc { display: flex; flex-direction: column; align-items: center; line-height: 8px; }
    .binoc b { font: 700 9px/9px "Liberation Sans", sans-serif; color: #333; }

    .toolbar { display: flex; align-items: center; height: 36px; border-bottom: 2px solid #a0a0a0; }
    .toolbar .cell { align-items: center; }
    .menubtn { display: flex; align-items: center; gap: 3px; font-size: 14px; white-space: nowrap; }
    .menubtn .caret { margin-left: 4px; }
    .active {
      display: flex;
      align-items: center;
      justify-content: center;
      width: 22px;
      height: 22px;
      background: #b8d0cb;
      border: 1px solid #9dbdb6;
    }

    .status {
      width: 84px;
      height: 23px;
      overflow: hidden;
      font-size: 14px;
      line-height: 23px;
      font-weight: 700;
      white-space: nowrap;
    }
    .status span { margin-left: -3px; display: block; }

    .work { display: flex; height: 458px; }
    .rail { flex: none; width: 25px; background: #fff; border-right: 1px solid #a8a8a8; }
    .railgear { height: 42px; padding: 5px 0 0 1px; background: #d8d8d8; color: #333; }
    .railitem { display: flex; justify-content: center; padding-right: 1px; }
    .railitem.grey { background: #d8d8d8; }
    .nav { flex: none; width: 59px; padding: 6px 0 0 7px; background: #fff; overflow: hidden; }
    .navtitle { height: 26px; padding-left: 3px; font-size: 15px; line-height: 20px; white-space: nowrap; }
    .tree { border: 1px solid #d8d8d8; height: 440px; width: 80px; }
    .thead { height: 24px; padding-left: 7px; background: #f0f0f0; border-bottom: 1px solid #ddd; font-size: 15px; line-height: 24px; }
    .row {
      display: flex;
      align-items: center;
      height: 24px;
      border-bottom: 1px solid #efefef;
      white-space: nowrap;
      font-size: 15px;
    }
    .row:nth-child(odd) { background: #fafafa; }
    .row .glyph { flex: none; fill: none; stroke: #888; stroke-dasharray: 1 1; }
    .rowicon { display: flex; gap: 2px; margin: 0 2px 0 -6px; }
    .cb {
      flex: none;
      width: 13px;
      height: 13px;
      border: 1px solid #222;
      background: #fff;
      overflow: hidden;
    }

    .view { flex: 1; position: relative; background: linear-gradient(#b4b4b4, #e0e1e3); }
    .view svg { position: absolute; inset: 0; width: 100%; height: 100%; }
    .axis { font: 12px "Liberation Sans", sans-serif; fill: #16a0a0; }

    .dialog {
      position: absolute;
      left: 84px;
      top: 161px;
      width: 379px;
      height: 517px;
      overflow: hidden;
      background: #e6e6e6;
      border-left: 1px solid #a8a8a8;
    }
    .dtitle {
      display: flex;
      align-items: center;
      height: 27px;
      padding: 0 7px 0 8px;
      background: #5c8680;
      color: #eaf2f0;
      font-size: 16px;
    }
    .dtitle .name { margin-left: 10px; flex: 1; }
    .dtitle .ic + .ic { margin-left: 7px; }
    .dbody { display: flex; flex-direction: column; gap: 4px; padding: 4px 5px 0 5px; }
    .sec { padding: 0 9px 6px 9px; background: #fff; border-bottom: 2px solid #ccc; }
    .sec.closed { height: 27px; padding-bottom: 0; }
    .shead {
      display: flex;
      align-items: center;
      justify-content: space-between;
      height: 34px;
      margin: 0 -2px 0 -1px;
      padding-bottom: 7px;
      color: #3a94c8;
      font-size: 18px;
    }
    .sec.closed .shead { height: 27px; padding-bottom: 1px; }
    .chev { width: 15px; height: 10px; margin-right: 3px; fill: none; stroke: #2e87b5; stroke-width: 2.6; }
    .rows { display: flex; flex-direction: column; gap: 2px; }
    .drow { display: flex; align-items: center; justify-content: space-between; font-size: 15px; height: 32px; white-space: nowrap; }
    .drow > span:first-child:not(.hilite) { padding-bottom: 2px; }
    .drow.s { height: 28px; }
    .drow.t { height: 24px; }
    .drow.off { color: #a8a8a8; }
    .drop {
      display: flex;
      align-items: center;
      justify-content: space-between;
      width: 152px;
      height: 28px;
      padding: 0 7px 2px 5px;
      border: 1px solid #aaa;
      background: #fff;
      font-size: 15px;
    }
    .drop .caret { margin-top: 2px; }
    .drop.full { width: 350px; height: 28px; padding: 2px 7px 2px 2px; }
    .pickband {
      display: flex;
      flex: 1;
      align-items: center;
      gap: 4px;
      height: 100%;
      margin-right: 10px;
      padding-left: 2px;
      background: #3399ff;
      color: #fff;
      outline: 1px dotted #e09030;
      outline-offset: -1px;
    }
    .drop.narrow { width: 53px; height: 32px; padding: 0 7px 0 5px; }
    .btn { display: flex; align-items: center; justify-content: center; width: 32px; height: 32px; border: 1px solid #ddd; background: #fff; }
    .btn.on { background: #9fcce6; border-color: #5ba5d0; }
    .btn.t { width: 24px; height: 24px; border-color: #aaa; }
    .hilite { flex: 1; height: 100%; margin-right: 2px; background: #fbd56f; line-height: 32px; }
    .btn.sel { background: #f8e6b0; border-color: #fbd56f; }
    .ptr { display: flex; align-items: center; gap: 2px; }

    .net { position: absolute; left: 1430px; top: 156px; width: 125px; height: 54px; pointer-events: none; }
    .pill {
      position: absolute;
      left: 36px;
      top: 8px;
      width: 100px;
      height: 39px;
      border-radius: 20px;
      background: #f1f1f1;
      border: 1px solid #ddd;
      box-shadow: 0 2px 4px rgba(0, 0, 0, 0.25);
    }
    .orb {
      position: absolute;
      left: 6px;
      top: 3px;
      width: 47px;
      height: 47px;
      border-radius: 50%;
      border: 3px solid #f2f2f2;
      background: linear-gradient(#0d6e45 0, #107a4c 58%, #4fce60 58%, #4fce60 100%);
      box-shadow: 0 2px 6px rgba(0, 0, 0, 0.45);
      color: #fff;
      font-size: 16px;
      line-height: 40px;
      text-align: center;
    }
    .rate { position: absolute; left: 84px; font: 10.500px/12px "Liberation Sans", sans-serif; color: #222; }
    .plus {
      position: absolute;
      left: 108px;
      top: 18px;
      width: 18px;
      height: 18px;
      border-radius: 50%;
      background: #3a80d8;
      color: #fff;
      font: 700 16px/18px "Liberation Sans", sans-serif;
      text-align: center;
    }
    .redd { position: absolute; left: 117px; top: 17px; width: 8px; height: 8px; border-radius: 50%; background: #e03030; }
    .arr { position: absolute; left: 55px; }
    .arr.upw { top: 14px; }
    .arr.down { top: 30px; }
    .rate.upw { top: 14px; }
    .rate.down { top: 29px; }

    .stripicons { position: absolute; top: 201px; left: 1518px; display: flex; gap: 5px; }

    .mark { position: absolute; left: 1272px; top: 583px; display: flex; gap: 8px; pointer-events: none; color: #eff0f2; }
    .marktext { display: flex; flex-direction: column; width: 180px; }
    .markname { font: 700 37px/44px "Noto Sans CJK SC", sans-serif; white-space: nowrap; margin-top: 4px; letter-spacing: 0.4px; }
    .markname b { font-family: "Inter", sans-serif; letter-spacing: 8px; margin-right: -1px; }
    .markurl { font: 700 11px/14px "DejaVu Sans", sans-serif; letter-spacing: 5.200px; margin-top: 8px; white-space: nowrap; }
  `;

  private chevron(up: boolean) {
    return html`<svg class="chev" viewBox="0 0 15 10"><path d=${up ? "M1 9 7.500 2 14 9" : "M1 1 7.500 8 14 1"} /></svg>`;
  }

  private header(t: string, up = true) {
    return html`<div class="shead"><span>${t}</span>${this.chevron(up)}</div>`;
  }

  private renderTitlebar() {
    const items: Item[] = [
      { c: 16.5, w: 33, t: html`<span class="nx">NX</span>` },
      { c: 39, w: 1, t: html`<span class="vsep"></span>` },
      { c: 57, w: 16, t: ic("save", 16) },
      { c: 71, w: 1, t: html`<span class="vsep"></span>` },
      { c: 87, w: 16, t: ic("undo", 16) },
      { c: 104, w: 7, t: caret },
      { c: 121, w: 15, t: ic("redo", 15) },
      { c: 135, w: 1, t: html`<span class="vsep"></span>` },
      { c: 150, w: 16, t: ic("cut", 16) },
      { c: 173, w: 16, t: ic("copy", 16) },
      { c: 197, w: 16, t: ic("paste", 16) },
      { c: 210, w: 1, t: html`<span class="vsep"></span>` },
      { c: 226, w: 18, t: ic("newsk", 18) },
      { c: 243, w: 7, t: caret },
      { c: 251, w: 1, t: html`<span class="vsep"></span>` },
      { c: 266, w: 17, t: ic("brush", 17) },
      { c: 280, w: 1, t: html`<span class="vsep"></span>` },
      { c: 295, w: 17, t: ic("win", 17) },
      { c: 321, w: 28, t: html`<span class="qa">窗口</span>` },
      { c: 341, w: 7, t: caret },
      { c: 352, w: 7, t: html`<div class="over">${caret}</div>` },
      { c: 888, w: 300, t: html`<span class="winname">NX 10 - 建模 - [_model1.prt （修改的 ）]</span>` },
      { c: 1446.5, w: 72, t: html`<span class="siemens">SIEMENS</span>` },
      { c: 1513, w: 8, t: html`<span class="min"></span>` },
      { c: 1541, w: 12, t: html`<span class="restore"></span>` },
    ];
    return html`<div class="titlebar">${placed(0, items)}</div>`;
  }

  private renderTabs() {
    const tabs = ["曲线", "曲面", "分析", "视图", "渲染", "工具", "应用模块", "洁强工具v2.58", "洁强图层"];
    return html`<div class="tabs">
      <div class="file">文件(F)</div>
      <div class="tab on">主页</div>
      ${tabs.map((t) => html`<div class="tab">${t}</div>`)}
      <div class="tabright">
        ${placed(1270, [
          { c: 1348.5, w: 157, t: html`<div class="search"><span>查找命令</span>${ic("search", 16)}</div>` },
          { c: 1446, w: 16, t: ic("fit", 16) },
          { c: 1472, w: 15, t: ic("chev", 15) },
          { c: 1498, w: 15, t: ic("help", 15) },
          { c: 1521, w: 8, t: html`<span class="min"></span>` },
          { c: 1546, w: 12, t: html`<span class="restore"></span>` },
        ])}
      </div>
    </div>`;
  }

  private renderRibbon() {
    return html`<div class="ribbon">
      ${GROUPS.map(
        (g) => html`<div class="grp" style="width:${g.w}px">
          <div class="gbody">${g.body}</div>
          <div class="gfoot">
            <span class="glabel ${g.center ? "center" : ""}">${g.label}</span>
            <span class="gcaret">${caret}</span>
          </div>
        </div>`,
      )}
    </div>`;
  }

  private renderNav() {
    return html`<div class="nav">
      <div class="navtitle">部件导航</div>
      <div class="tree">
        <div class="thead">名称</div>
        ${ROWS.map(
          (r) => html`<div class="row">
            <svg class="glyph" width=${r.icon ? 24 : 40} height="24">${GLYPHS[r.glyph]}</svg>
            ${r.icon
              ? html`<span class="rowicon">
                  ${r.extra ? html`<svg class="ic" width="15" height="15" viewBox="0 0 24 24">${check(0, 0)}</svg>` : ""}
                  ${ic(r.icon, 18)}
                </span>`
              : html`<span class="cb"><svg class="ic" width="13" height="13" viewBox="0 0 24 24">${check(0, 0)}</svg></span>`}
            <span>${r.text}</span>
          </div>`,
        )}
        ${Array.from({ length: 6 }, () => html`<div class="row"></div>`)}
      </div>
    </div>`;
  }

  private renderDialog() {
    const flip = html`<span class="btn t">${ic("flip", 20)}</span>`;
    return html`<div class="dialog">
      <div class="dtitle">
        ${ic("gear", 16)}<span class="name">创建草图</span>
        ${ic("reset", 14)}${ic("close", 16)}
      </div>
      <div class="dbody">
        <section class="sec">
          ${this.header("草图类型")}
          <div class="drop full">
            <span class="pickband">${ic("skplane", 16)}<span>在平面上</span></span>${caret}
          </div>
        </section>
        <section class="sec">
          ${this.header("草图平面")}
          <div class="rows">
            <div class="drow s"><span>平面方法</span><div class="drop"><span>创建基准坐标系</span>${caret}</div></div>
            <div class="drow"><span>创建基准坐标系</span><span class="btn on">${ic("csysb", 26)}</span></div>
            <div class="drow off"><span>选择平的面或平面 (0)</span><span class="btn">${ic("target", 22)}</span></div>
            <div class="drow t"><span>反向</span>${flip}</div>
          </div>
        </section>
        <section class="sec">
          ${this.header("草图方向")}
          <div class="rows">
            <div class="drow s"><span>参考</span><div class="drop"><span>水平</span>${caret}</div></div>
            <div class="drow"><span class="hilite">选择参考 (0)</span><span class="btn sel">${ic("pick", 26)}</span></div>
            <div class="drow t"><span>反向</span>${flip}</div>
          </div>
        </section>
        <section class="sec">
          ${this.header("草图原点")}
          <div class="rows">
            <div class="drow">
              <span>指定点</span>
              <span class="ptr">
                <span class="btn t">${ic("point", 20)}</span>
                <span class="drop narrow">${ic("bolt", 20)}${caret}</span>
              </span>
            </div>
          </div>
        </section>
        <section class="sec closed">${this.header("设置", false)}</section>
      </div>
    </div>`;
  }

  private renderView() {
    const t = "#12a5a5";
    const d = "#0c6f70";
    return html`<div class="view">
      <svg viewBox="84 220 1471 458" preserveAspectRatio="none">
        <defs>
          <linearGradient id="vl" x1="0" x2="0" y1="0" y2="1">
            <stop offset="0" stop-color="#b03030" />
            <stop offset=".12" stop-color="#3c3030" />
            <stop offset="1" stop-color="#222" />
          </linearGradient>
        </defs>
        <path d="M463 281.500H820M885 281.500H1555M852.500 220V249" stroke="#444" fill="none" />
        <rect x="852" y="313" width="1" height="365" fill="url(#vl)" />
        <g fill="none" stroke=${t} stroke-width="1">
          <path d="M964.500 491H1006.500V532.500H964.500ZM964.500 511.500H1006.500M1006.500 532.500H1033" />
          <path d="M964.500 496.500H1006.500" stroke="#5eaaa8" />
        </g>
        <path d="M1032 529.500 1048 532.500 1032 535.500Z" fill=${t} />
        <path d="M1032 532.500H1048L1032 535.500Z" fill=${d} />
        <path d="M964.500 450 961.500 462 964.500 475 967.500 462Z" fill=${t} />
        <path d="M962 466H967L967 475 962 475Z" fill=${d} />
        <path d="M964.500 491 961.500 497 963 502H966L967.500 497Z" fill=${d} />
        <path d="M961 529 964.500 527 968 529 967 536 964.500 538 962 536Z" fill=${d} />
        <text class="axis" x="964.500" y="447" text-anchor="middle">Y</text>
        <text class="axis" x="964.500" y="491" text-anchor="middle">Z</text>
        <text class="axis" x="1054.500" y="537.500" text-anchor="middle">X</text>
      </svg>
    </div>`;
  }

  private renderOverlays() {
    return html`
      <div class="stripicons">${ic("checker", 15)}${ic("screen", 16)}</div>
      <div class="net">
        <div class="pill"></div>
        <svg class="arr upw" width="10" height="12" viewBox="0 0 10 12"><path d="M5 1 9 6H6.500V11H3.500V6H1Z" fill="#e2574c" /></svg>
        <svg class="arr down" width="10" height="12" viewBox="0 0 10 12"><path d="M5 11 9 6H6.500V1H3.500V6H1Z" fill="#2a9a55" /></svg>
        <span class="rate upw">0K/s</span>
        <span class="rate down">0K/s</span>
        <div class="plus">+</div>
        <div class="redd"></div>
        <div class="orb">42%</div>
      </div>
      <div class="mark">
        <svg width="72" height="82" viewBox="0 0 72 82">
          <path d="M36 0 71 20.500 60 29C54 16 46 8 20 9.300Z" fill="#c7e3f1" />
          <path d="M36 0 71 20.500V61L60 60C66 44 62 18 36 0Z" fill="#85cdee" />
          <path d="M71 61 36 82 28 70C44 72 62 64 71 37Z" fill="#72bde5" />
          <path d="M36 82 1 61 14 50C18 66 36 74 54 70Z" fill="#7ccaf0" />
          <path d="M1 61V20.500L16 26C8 40 6 56 24 72Z" fill="#a6d7f0" />
          <path d="M1 20.500 36 0 44 8C28 6 10 20 4 44Z" fill="#b0dbf1" />
          <path d="M36 18 56 29.500V52.500L36 64 16 52.500V29.500Z" fill="#dcdde0" />
          <path d="M36 23 52 32 36 41 20 32Z" fill="#a8dcf5" />
          <path d="M20 32 36 41V60L20 51Z" fill="#98cdee" />
          <path d="M52 32 36 41V60L52 51Z" fill="#72bde5" />
        </svg>
        <div class="marktext">
          <div class="markname"><b>3D</b>世界网</div>
          <div class="markurl">WWW.3DSJW.COM</div>
        </div>
      </div>
    `;
  }

  render() {
    return html`
      ${this.renderTitlebar()} ${this.renderTabs()} ${this.renderRibbon()}
      <div class="toolbar">${placed(0, toolItems())}</div>
      <div class="status"><span>选择水平参考或</span></div>
      <div class="work">
        <div class="rail">
          <div class="railgear">${ic("gear", 15)}</div>
          ${RAIL.map(
            ([n, top, bottom, c, grey]) => html`<div
              class="railitem ${grey ? "grey" : ""}"
              style="height:${bottom - top}px;padding-top:${c - 12 - top}px"
            >${ic(n, 24)}</div>`,
          )}
        </div>
        ${this.renderNav()} ${this.renderView()}
      </div>
      ${this.renderDialog()} ${this.renderOverlays()}
    `;
  }
}
